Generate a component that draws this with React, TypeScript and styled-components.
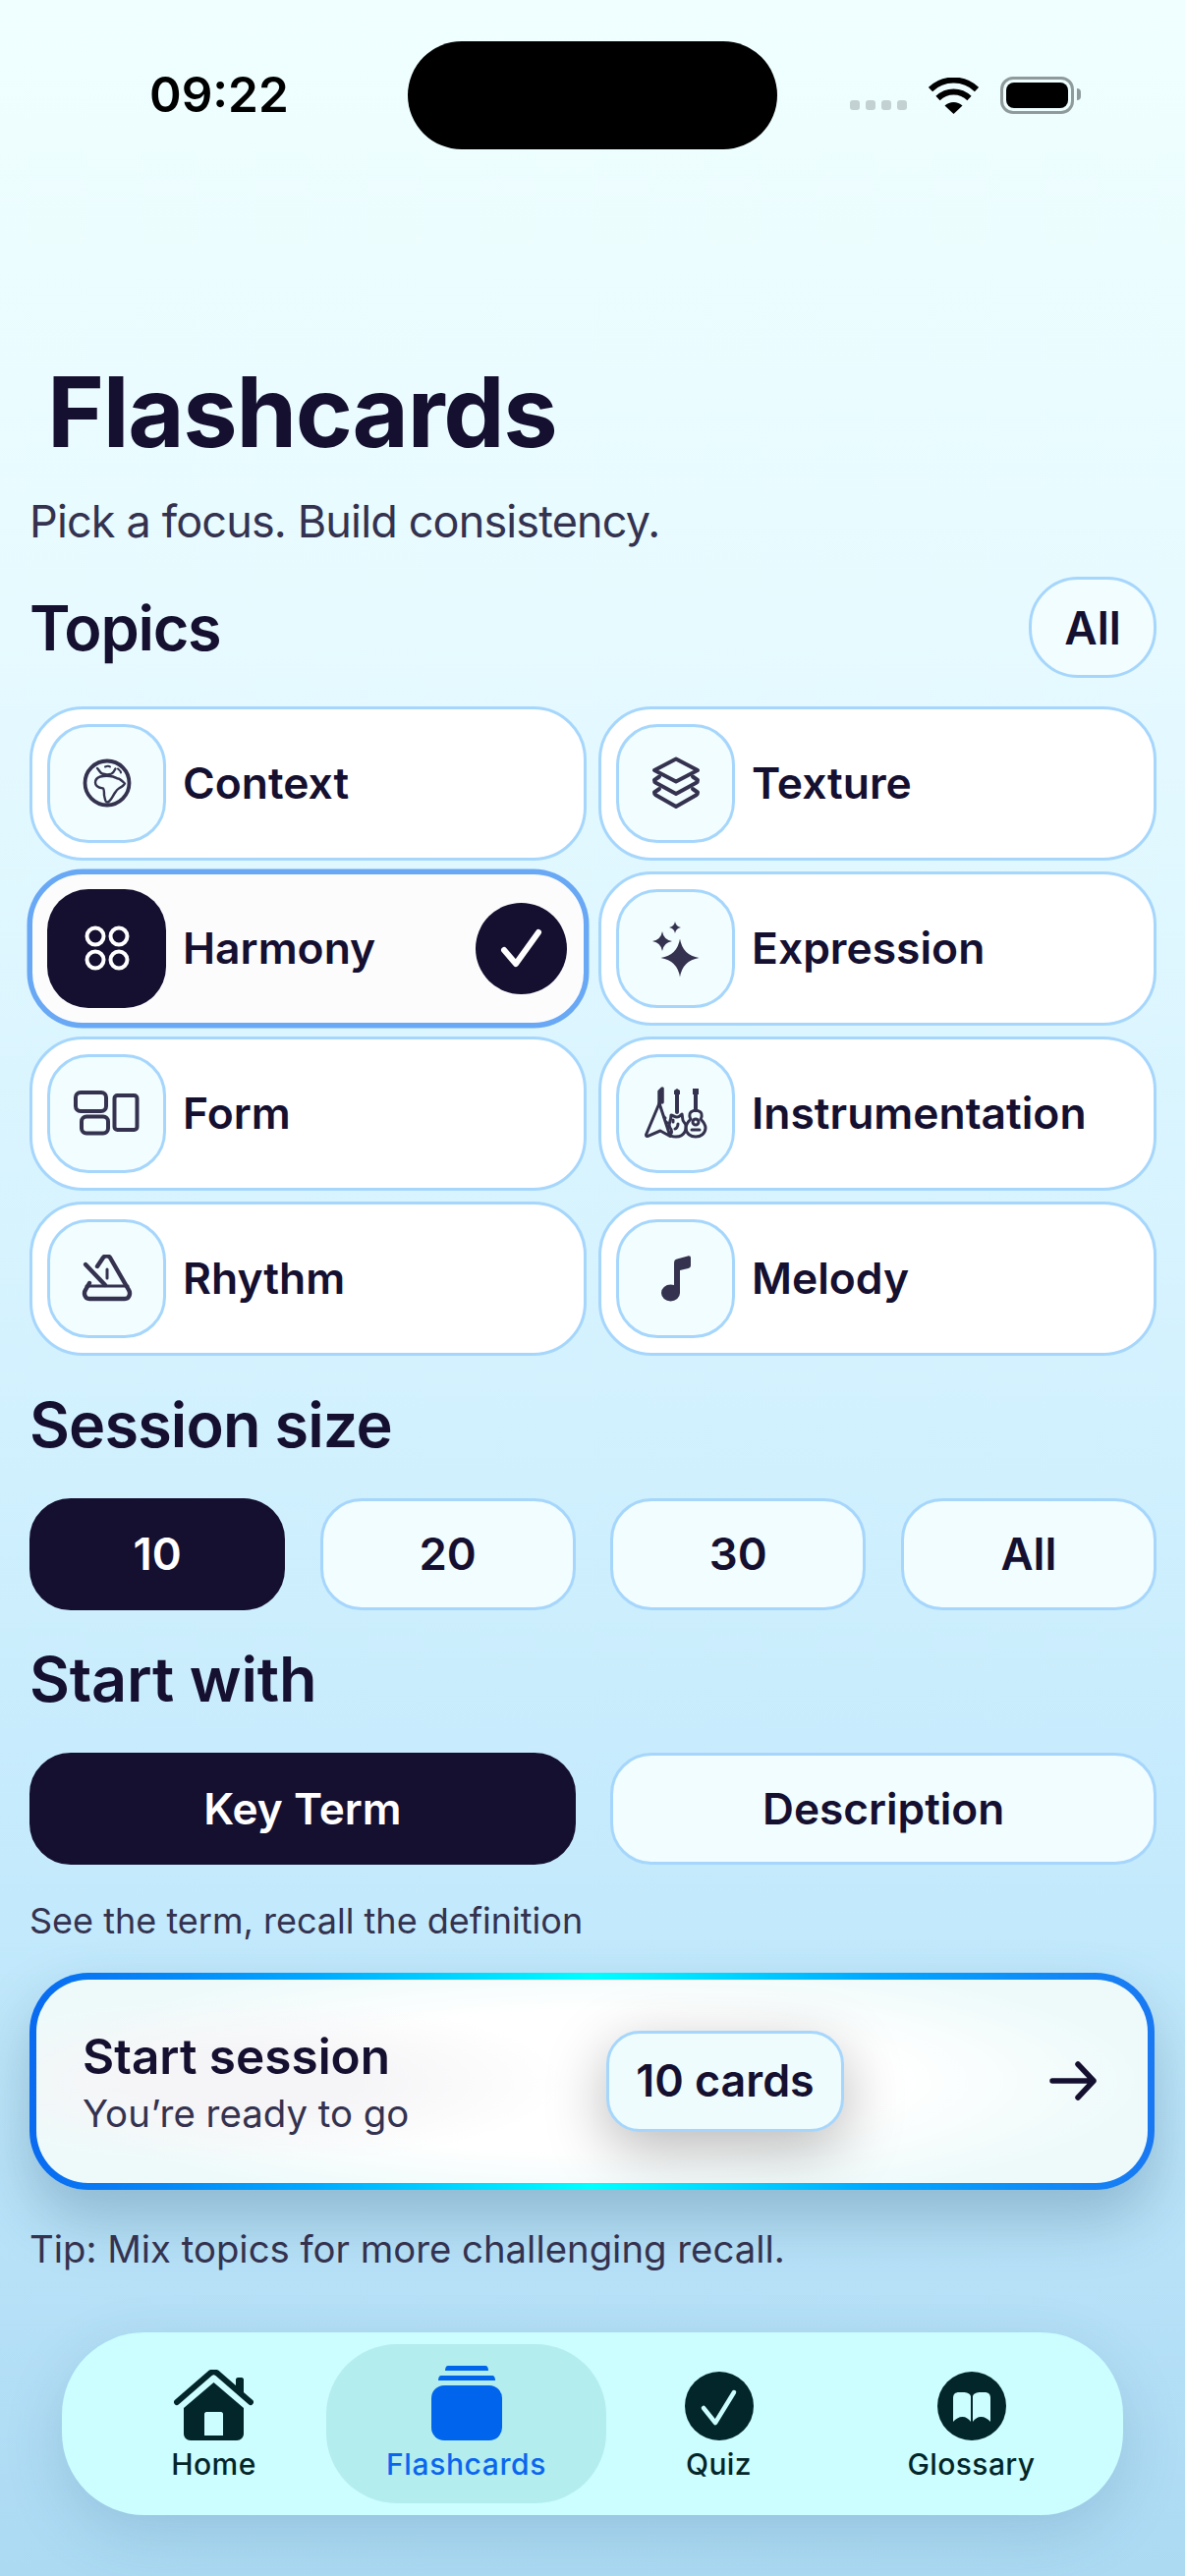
import React from "react";
import styled, { createGlobalStyle } from "styled-components";

const Global = createGlobalStyle`
  html, body { margin: 0; padding: 0; }
  body { font-family: Inter, "Noto Sans", sans-serif; color: #150f30; }
  #root { width: 1206px; }
`;

const Page = styled.div`
  width: 1206px;
  height: 2622px;
  box-sizing: border-box;
  padding: 42px 29px 0 30px;
  overflow: hidden;
  background: linear-gradient(180deg, #f0ffff 0%, #e6faff 25%, #d2f1fe 55%, #c2e9fc 75%, #acdaf3 100%);
`;

const StatusBar = styled.div`
  display: grid;
  grid-template-columns: 385px 376px 1fr;
  align-items: center;
  height: 110px;
`;

const Time = styled.div`
  padding-left: 122px;
  font-size: 49.5px;
  line-height: 1;
  font-weight: 600;
  color: #000;
`;

const Island = styled.div`
  height: 110px;
  border-radius: 55px;
  background: #000;
`;

const StatusIcons = styled.div`
  display: flex;
  align-items: center;
  padding-left: 74px;
`;

const Dots = styled.div`
  display: flex;
  gap: 6px;
  margin: 20px 22px 0 0;
`;

const Dot = styled.span`
  width: 10px;
  height: 10px;
  border-radius: 3px;
  background: #c3d1d2;
`;

const Battery = styled.div`
  position: relative;
  box-sizing: border-box;
  width: 75px;
  height: 38px;
  margin-left: 22px;
  padding: 3px;
  border: 3px solid #8f9b9b;
  border-radius: 13px;
  &::after {
    content: "";
    position: absolute;
    right: -10px;
    top: 9px;
    width: 4px;
    height: 12px;
    border-radius: 0 6px 6px 0;
    background: #8f9b9b;
  }
`;

const BatteryFill = styled.div`
  height: 100%;
  border-radius: 8px;
  background: #000;
`;

const Title = styled.h1`
  margin: 208px 0 0;
  padding-left: 18px;
  font-size: 99px;
  line-height: 119px;
  font-weight: 700;
  letter-spacing: -1.35px;
  color: #150f30;
`;

const Subtitle = styled.p`
  margin: 25px 0 0;
  font-size: 45px;
  line-height: 54px;
  font-weight: 400;
  letter-spacing: -0.85px;
  color: #34324f;
`;

const SectionHead = styled.div`
  display: flex;
  align-items: center;
  justify-content: space-between;
  margin-top: 29px;
`;

const Heading = styled.h2<{ $top?: number; $track: number }>`
  margin: ${(p) => p.$top ?? 0}px 0 0;
  font-size: 63px;
  line-height: 76px;
  font-weight: 600;
  letter-spacing: ${(p) => p.$track}px;
  color: #150f30;
`;

const AllPill = styled.button`
  box-sizing: border-box;
  width: 130px;
  height: 103px;
  padding: 0;
  border: 3px solid #a6d6fc;
  border-radius: 50px;
  background: #f2fdff;
  font: 600 46px Inter, sans-serif;
  color: #150f30;
`;

const TopicGrid = styled.div`
  display: grid;
  grid-template-columns: 567px 568px;
  grid-auto-rows: 156.6px;
  gap: 11.4px 12px;
  margin-top: 29px;
`;

const TopicCard = styled.div<{ $active?: boolean }>`
  box-sizing: border-box;
  display: flex;
  align-items: center;
  gap: 17px;
  padding: 0 17px 0 15px;
  border: 3px solid ${(p) => (p.$active ? "#69a8f5" : "#a6d6fc")};
  border-radius: 54px;
  background: ${(p) => (p.$active ? "#fcfcfd" : "#fff")};
  box-shadow: ${(p) => (p.$active ? "0 0 0 2.5px #69a8f5" : "none")};
`;

const IconBox = styled.div<{ $active?: boolean }>`
  box-sizing: border-box;
  flex: none;
  display: flex;
  align-items: center;
  justify-content: center;
  width: 121px;
  height: 121px;
  border: ${(p) => (p.$active ? "none" : "3px solid #a6d6fc")};
  border-radius: 42px;
  background: ${(p) => (p.$active ? "#150f30" : "#f2fdff")};
`;

const TopicLabel = styled.span`
  flex: 1;
  font-size: 44.4px;
  font-weight: 600;
  color: #150f30;
`;

const CheckCircle = styled.div`
  flex: none;
  display: flex;
  align-items: center;
  justify-content: center;
  width: 93px;
  height: 93px;
  border-radius: 50%;
  background: #150f30;
`;

const Segments = styled.div<{ $count: number }>`
  display: grid;
  grid-template-columns: repeat(${(p) => p.$count}, 1fr);
  column-gap: 35.5px;
  height: 114px;
  margin-top: 37px;
`;

const Segment = styled.button<{ $active?: boolean; $size: number }>`
  box-sizing: border-box;
  padding: 0;
  border: 3px solid ${(p) => (p.$active ? "#150f30" : "#a6d6fc")};
  border-radius: 42px;
  background: ${(p) => (p.$active ? "#150f30" : "#f2fdff")};
  color: ${(p) => (p.$active ? "#fff" : "#150f30")};
  font: 600 ${(p) => p.$size}px Inter, sans-serif;
`;

const Hint = styled.p<{ $top: number; $size: number }>`
  margin: ${(p) => p.$top}px 0 0;
  font-size: ${(p) => p.$size}px;
  line-height: 44px;
  color: #34324f;
`;

const StartCard = styled.div`
  box-sizing: border-box;
  display: grid;
  grid-template-columns: 533px 242px 1fr;
  align-items: center;
  width: 1145px;
  height: 221px;
  margin-top: 31px;
  padding-left: 47px;
  border: 7px solid transparent;
  border-radius: 60px;
  background:
    radial-gradient(ellipse 330px 85px at 210px 50%, #f5f5f7 35%, rgba(245, 245, 247, 0) 100%) padding-box,
    radial-gradient(ellipse 560px 130px at 50% 50%, #fff 55%, rgba(255, 255, 255, 0) 100%) padding-box,
    linear-gradient(#eefafa, #eefafa) padding-box,
    linear-gradient(90deg, #0a6af0 0%, #00a8ff 25%, #00ffff 50%, #00a8ff 75%, #1a78f2 100%) border-box;
  box-shadow: 0 30px 60px rgba(25, 70, 105, 0.27);
  overflow: hidden;
`;

const StartText = styled.div`
  display: flex;
  flex-direction: column;
`;

const StartTitle = styled.span`
  font-size: 49.5px;
  line-height: 60px;
  font-weight: 600;
  color: #150f30;
`;

const StartSub = styled.span`
  margin-top: 5px;
  font-size: 38.4px;
  line-height: 46px;
  color: #34324f;
`;

const CountChip = styled.div`
  box-sizing: border-box;
  display: flex;
  align-items: center;
  justify-content: center;
  height: 103px;
  border: 3px solid #a6d6fc;
  border-radius: 34px;
  background: #eefcfd;
  font-size: 44.8px;
  font-weight: 600;
  color: #150f30;
  box-shadow: 0 18px 62px rgba(0, 0, 0, 0.28);
`;

const ArrowSlot = styled.div`
  display: flex;
  justify-content: flex-end;
  padding-right: 52px;
`;

const Nav = styled.nav`
  box-sizing: border-box;
  display: grid;
  grid-template-columns: repeat(4, 1fr);
  align-items: center;
  width: 1080px;
  height: 186px;
  margin: 63px 0 0 33px;
  padding: 0 26px;
  border-radius: 84px;
  background: #ccfdff;
  box-shadow: 0 20px 60px rgba(40, 90, 130, 0.18);
`;

const NavItem = styled.div<{ $active?: boolean }>`
  display: flex;
  flex-direction: column;
  align-items: center;
  justify-content: center;
  gap: 6px;
  height: 162px;
  margin: 0 ${(p) => (p.$active ? -14 : 0)}px;
  border-radius: 72px;
  background: ${(p) => (p.$active ? "#b3edee" : "transparent")};
  color: ${(p) => (p.$active ? "#0a66ee" : "#03262a")};
  font-size: 30px;
  line-height: 36px;
  font-weight: 500;
  letter-spacing: ${(p) => (p.$active ? 0.6 : 0.4)}px;
`;

const NavIconSlot = styled.div`
  display: flex;
  align-items: flex-end;
  justify-content: center;
  height: 76px;
`;

const ink = "#34324f";

const GlobeIcon = () => (
  <svg width="50" height="50" viewBox="0 0 50 50" fill="none" stroke={ink} strokeLinejoin="round" strokeLinecap="round">
    <circle cx="25" cy="25" r="22.500" strokeWidth="3.800" />
    <path strokeWidth="2.400" d="M13 24.500c0-3 2-5 5-6 4-1 9-1 13 0 2 .5 4 2 5 2 2 0 5 3 7 5-1 2-4 4-6 5s-3 3-5 6c-2 3-4 8-7 8-2 0-2-3-3-7 0-3 0-6-1-7-3-.5-8-1-8-6z" />
    <path strokeWidth="2.400" d="M15 10c2 2 3 5 5 5.500 3 1 7 1 9.500 0 2-1 3-3 4-5" />
    <path strokeWidth="2" d="M23 8.500c2-1 4-1 5 0M36 10.500c1 1 3 2 3 4" />
  </svg>
);

const LayersIcon = () => (
  <svg width="50" height="54" viewBox="0 0 50 54" fill="none" stroke={ink} strokeWidth="4" strokeLinejoin="round" strokeLinecap="round">
    <path d="M25 2.500 47 14 25 25.500 3 14z" />
    <path d="M8 20.500 3 24c0 1 0 2 1 2.500L25 38l21-11.500c1-.5 1-1.500 1-2.500l-5-3.500" />
    <path d="M8 33 3 36.500c0 1 0 2 1 2.500L25 51l21-12c1-.5 1-1.500 1-2.500L42 33" />
  </svg>
);

const RingsIcon = () => (
  <svg width="46" height="46" viewBox="0 0 46 46" fill="none" stroke="#fff" strokeWidth="4">
    <circle cx="11" cy="11" r="8.500" />
    <circle cx="35" cy="11" r="8.500" />
    <circle cx="11" cy="35" r="8.500" />
    <circle cx="35" cy="35" r="8.500" />
  </svg>
);

const FormIcon = () => (
  <svg width="67" height="46" viewBox="0 0 67 46" fill="none" stroke={ink} strokeWidth="4">
    <rect x="2" y="2" width="31" height="19" rx="5" />
    <rect x="8" y="26.500" width="27" height="17" rx="5" />
    <rect x="41.500" y="5" width="23" height="35" rx="3" />
  </svg>
);

const star = (x: number, y: number, r: number, k = 0.14) =>
  `M${x} ${y - r}Q${x + r * k} ${y - r * k} ${x + r} ${y}Q${x + r * k} ${y + r * k} ${x} ${y + r}Q${x - r * k} ${y + r * k} ${x - r} ${y}Q${x - r * k} ${y - r * k} ${x} ${y - r}Z`;

const SparklesIcon = () => (
  <svg width="48" height="60" viewBox="0 0 48 60" fill={ink}>
    <path d={star(28, 40, 19.5)} />
    <path d={star(10, 23, 10)} />
    <path d={star(23, 9, 6)} />
  </svg>
);

const GuitarsIcon = () => (
  <svg width="64" height="54" viewBox="0 0 64 54" fill="none" stroke={ink} strokeWidth="3" strokeLinejoin="round" strokeLinecap="round">
    <path strokeWidth="3.500" d="M15 19V5l3-3v14" />
    <path d="M15 17 1.500 49c0 1.500 1 1.800 2 1.400L16 45l10 5.500L15 17z" />
    <path d="M20 31l1 1M22 36l1 1" />
    <path strokeWidth="4" d="M33 6v20" />
    <path fill={ink} stroke="none" d="M30 4l3-2 3 2v4h-6z" />
    <path d="M27 29c2 0 3 2 6 2s3-2 5-3c1 3 0 6 2 8s3 6 1 10-5 5-9 5-6-1-6-3c2 0 2-4 0-6-3-3 1-6 1-13z" />
    <path d="M34 38c0 3-2 5-3 5M29 34v2" />
    <path strokeWidth="4" d="M52 6v18" />
    <path fill={ink} stroke="none" d="M49 2h6v6h-6z" />
    <path d="M47 26c3-2 7-2 10 0 2 2 1 6 0 7 2 2 5 5 5 9 0 6-5 9-10 9s-10-3-10-9c0-4 3-7 5-9-1-1-2-5 0-7z" />
    <circle cx="52" cy="36" r="3" />
    <path d="M48 44h8" />
  </svg>
);

const MetronomeIcon = () => (
  <svg width="52" height="48" viewBox="0 0 52 48" fill="none" stroke={ink} strokeWidth="4.400" strokeLinecap="round" strokeLinejoin="round">
    <path d="M16 12 22 3c2-2 5-2 7 0l19 33c2 3 1 9-4 9H8c-5 0-6-6-4-9l4-7" />
    <path d="M5 32h42" strokeWidth="3" />
    <path d="M4 10 24 31" />
    <path d="M26 15v9" strokeWidth="3" />
  </svg>
);

const NoteIcon = () => (
  <svg width="30" height="47" viewBox="0 0 30 47" fill={ink}>
    <ellipse cx="9.500" cy="38" rx="9.500" ry="8.500" />
    <path d="M13 8c0-3 1-4 3-4.500L27 .5c2-.5 3 .5 3 2V10c0 1.500-1 2.500-2.500 3L19 15v23h-6z" />
  </svg>
);

const WifiIcon = () => (
  <svg width="51" height="37" viewBox="0 0 51 37">
    <path d="M25.500 37 16.500 28.500A13 13 0 0 1 34.500 28.500Z" fill="#000" />
    <path d="M9.500 21A23 23 0 0 1 41.500 21" fill="none" stroke="#000" strokeWidth="6" />
    <path d="M2 12A34 34 0 0 1 49 12" fill="none" stroke="#000" strokeWidth="6" />
  </svg>
);

const CheckMark = () => (
  <svg width="44" height="42" viewBox="0 0 44 42" fill="none" stroke="#fff" strokeWidth="6" strokeLinecap="round" strokeLinejoin="round">
    <path d="M4 23 16 37 39 5" />
  </svg>
);

const ArrowIcon = () => (
  <svg width="48" height="40" viewBox="0 0 48 40" fill="none" stroke="#150f30" strokeWidth="5.500" strokeLinecap="round" strokeLinejoin="round">
    <path d="M3 20H45M29 3 45 20 29 37" />
  </svg>
);

const navInk = "#03262a";

const HomeIcon = () => (
  <svg width="81" height="72" viewBox="0 0 81 72">
    <path d="M3 33 37 3.500c2-1.500 5-1.500 7 0L78 33" fill="none" stroke={navInk} strokeWidth="6" strokeLinecap="round" strokeLinejoin="round" />
    <path fill={navInk} d="M63 10c0-1 1-2 2-2h4c1 0 2 1 2 2v18l-8-6.500zM40.500 13 71 39v26c0 4-3 7-7 7H17c-4 0-7-3-7-7V39z" />
    <path fill="#ccfdff" d="M33 43h15c1 0 2 1 2 2v22H31V45c0-1 1-2 2-2z" />
  </svg>
);

const CardsIcon = () => (
  <svg width="72" height="76" viewBox="0 0 72 76" fill="#0064ec">
    <path d="M17 0h38c2 0 3 2 3 5H14c0-3 1-5 3-5z" />
    <path d="M10 10h52c2 0 3 2 3 5H7c0-3 1-5 3-5z" />
    <rect x="0" y="20" width="72" height="56" rx="13" />
  </svg>
);

const QuizIcon = () => (
  <svg width="70" height="70" viewBox="0 0 70 70">
    <circle cx="35" cy="35" r="35" fill={navInk} />
    <path d="M19 37 31 52 50 21" fill="none" stroke="#ccfdff" strokeWidth="4.500" strokeLinecap="round" strokeLinejoin="round" />
  </svg>
);

const GlossaryIcon = () => (
  <svg width="70" height="70" viewBox="0 0 70 70">
    <circle cx="35" cy="35" r="35" fill={navInk} />
    <path fill="#ccfdff" d="M16 27c0-4 2-6 6-6h4c4 0 7 1 8 4v26c-2-3-5-5-8.500-5s-7 2-9.500 5zM54 27c0-4-2-6-6-6h-4c-4 0-7 1-8 4v26c2-3 5-5 8.500-5s7 2 9.500 5z" />
  </svg>
);

const topics: { name: string; icon: React.ReactNode; active?: boolean }[] = [
  { name: "Context", icon: <GlobeIcon /> },
  { name: "Texture", icon: <LayersIcon /> },
  { name: "Harmony", icon: <RingsIcon />, active: true },
  { name: "Expression", icon: <SparklesIcon /> },
  { name: "Form", icon: <FormIcon /> },
  { name: "Instrumentation", icon: <GuitarsIcon /> },
  { name: "Rhythm", icon: <MetronomeIcon /> },
  { name: "Melody", icon: <NoteIcon /> },
];

const navItems: { name: string; icon: React.ReactNode; active?: boolean }[] = [
  { name: "Home", icon: <HomeIcon /> },
  { name: "Flashcards", icon: <CardsIcon />, active: true },
  { name: "Quiz", icon: <QuizIcon /> },
  { name: "Glossary", icon: <GlossaryIcon /> },
];

export default function App() {
  return (
    <Page>
      <Global />
      <StatusBar>
        <Time>09:22</Time>
        <Island />
        <StatusIcons>
          <Dots>
            <Dot />
            <Dot />
            <Dot />
            <Dot />
          </Dots>
          <WifiIcon />
          <Battery>
            <BatteryFill />
          </Battery>
        </StatusIcons>
      </StatusBar>

      <Title>Flashcards</Title>
      <Subtitle>Pick a focus. Build consistency.</Subtitle>

      <SectionHead>
        <Heading $track={-1.3}>Topics</Heading>
        <AllPill>All</AllPill>
      </SectionHead>

      <TopicGrid>
        {topics.map((t) => (
          <TopicCard key={t.name} $active={t.active}>
            <IconBox $active={t.active}>{t.icon}</IconBox>
            <TopicLabel>{t.name}</TopicLabel>
            {t.active && (
              <CheckCircle>
                <CheckMark />
              </CheckCircle>
            )}
          </TopicCard>
        ))}
      </TopicGrid>

      <Heading $top={32} $track={-0.9}>Session size</Heading>
      <Segments $count={4}>
        <Segment $active $size={45.5}>10</Segment>
        <Segment $size={45.5}>20</Segment>
        <Segment $size={45.5}>30</Segment>
        <Segment $size={45.5}>All</Segment>
      </Segments>

      <Heading $top={32} $track={-0.2}>Start with</Heading>
      <Segments $count={2}>
        <Segment $active $size={44.2}>Key Term</Segment>
        <Segment $size={44.2}>Description</Segment>
      </Segments>

      <Hint $top={35} $size={36}>See the term, recall the definition</Hint>

      <StartCard>
        <StartText>
          <StartTitle>Start session</StartTitle>
          <StartSub>You’re ready to go</StartSub>
        </StartText>
        <CountChip>10 cards</CountChip>
        <ArrowSlot>
          <ArrowIcon />
        </ArrowSlot>
      </StartCard>

      <Hint $top={38} $size={38.3}>Tip: Mix topics for more challenging recall.</Hint>

      <Nav>
        {navItems.map((n) => (
          <NavItem key={n.name} $active={n.active}>
            <NavIconSlot>{n.icon}</NavIconSlot>
            {n.name}
          </NavItem>
        ))}
      </Nav>
    </Page>
  );
}
